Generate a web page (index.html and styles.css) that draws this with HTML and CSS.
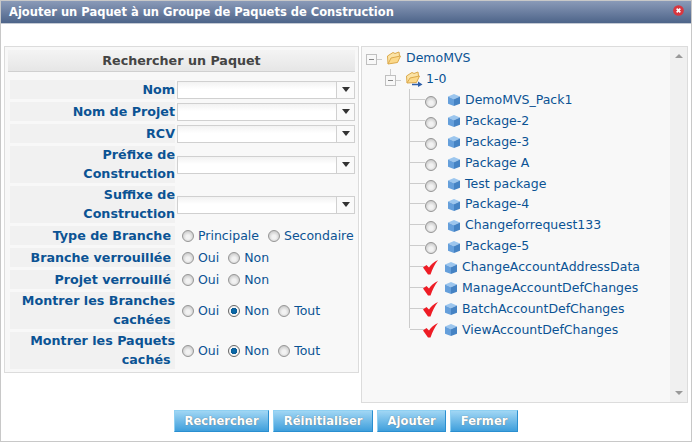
FILE: index.html
```html
<!DOCTYPE html>
<html lang="fr">
<head>
    <meta charset="UTF-8">
    <title>Ajouter un Paquet</title>
    <link rel="stylesheet" href="styles.css">
</head>
<body>
<div class="dialog">
    <div class="titlebar">
        <span>Ajouter un Paquet à un Groupe de Paquets de Construction</span>
        <span class="close">
            <svg width="11" height="11" viewBox="0 0 12 12"><circle cx="6" cy="6" r="5.8" fill="#d8363f"/><path d="M4 4l4 4M8 4l-4 4" stroke="#fff" stroke-width="1.800"/></svg>
        </span>
    </div>

    <div class="columns">
        <form class="search-panel">
            <div class="panel-title">Rechercher un Paquet</div>
            <div class="fields">
                <label class="field-label">Nom</label>
                <div class="field"><div class="combo"><span class="combo-text"></span><span class="combo-btn"></span></div></div>

                <label class="field-label">Nom de Projet</label>
                <div class="field"><div class="combo"><span class="combo-text"></span><span class="combo-btn"></span></div></div>

                <label class="field-label">RCV</label>
                <div class="field"><div class="combo"><span class="combo-text"></span><span class="combo-btn"></span></div></div>

                <label class="field-label tall">Préfixe de Construction</label>
                <div class="field"><div class="combo"><span class="combo-text"></span><span class="combo-btn"></span></div></div>

                <label class="field-label tall">Suffixe de Construction</label>
                <div class="field"><div class="combo"><span class="combo-text"></span><span class="combo-btn"></span></div></div>

                <label class="field-label pad">Type de Branche</label>
                <div class="field radios">
                    <label><input type="radio" name="type">Principale</label>
                    <label><input type="radio" name="type">Secondaire</label>
                </div>

                <label class="field-label pad">Branche verrouillée</label>
                <div class="field radios">
                    <label><input type="radio" name="bv">Oui</label>
                    <label><input type="radio" name="bv">Non</label>
                </div>

                <label class="field-label pad">Projet verrouillé</label>
                <div class="field radios">
                    <label><input type="radio" name="pv">Oui</label>
                    <label><input type="radio" name="pv">Non</label>
                </div>

                <label class="field-label tall">Montrer les Branches cachées&nbsp;</label>
                <div class="field radios">
                    <label><input type="radio" name="mb">Oui</label>
                    <label><input type="radio" name="mb" checked>Non</label>
                    <label><input type="radio" name="mb">Tout</label>
                </div>

                <label class="field-label tall">Montrer les Paquets cachés&nbsp;</label>
                <div class="field radios">
                    <label><input type="radio" name="mp">Oui</label>
                    <label><input type="radio" name="mp" checked>Non</label>
                    <label><input type="radio" name="mp">Tout</label>
                </div>
            </div>
        </form>

        <div class="tree-panel">
            <div class="tree">
                <div class="tree-row">
                    <span class="toggle"></span><span class="stub-short"></span>
                    <svg class="folder" width="14" height="14" viewBox="0 0 14 14"><path d="M1 13L.5 5 6 1.500l2 1 4-1.500 .5 4" fill="#fbe3a6" stroke="#dba94c"/><path d="M1 13L4 7l9.500-2L10.500 11.500z" fill="#fcd98a" stroke="#dba94c"/></svg>
                    <span class="root-name">DemoMVS</span>
                </div>
                <div class="branch-wrap">
                    <div class="tree-row">
                        <span class="toggle child"></span><span class="stub-short"></span>
                        <svg class="folder-arrow" width="17" height="16" viewBox="0 0 17 16"><path d="M1 12L.5 5 6 1.500l2 1 4-1.500 .5 4" fill="#fbe3a6" stroke="#dba94c"/><path d="M1 12L4 7l9.500-2L10.500 11.500z" fill="#fcd98a" stroke="#dba94c"/><path d="M6 13.500h7" stroke="#2f5fa8" stroke-width="1.500"/><path d="M12 10.500l4.500 3-4.500 2.500z" fill="#2f5fa8"/></svg>
                        <span class="branch-name">1-0</span>
                    </div>
                    <ul class="leaves">
                        <li><span class="stub"></span><input type="radio" name="pkg"><svg class="cube" viewBox="0 0 12 12"><use href="#cube"/></svg><span>DemoMVS_Pack1</span></li>
                        <li><span class="stub"></span><input type="radio" name="pkg"><svg class="cube" viewBox="0 0 12 12"><use href="#cube"/></svg><span>Package-2</span></li>
                        <li><span class="stub"></span><input type="radio" name="pkg"><svg class="cube" viewBox="0 0 12 12"><use href="#cube"/></svg><span>Package-3</span></li>
                        <li><span class="stub"></span><input type="radio" name="pkg"><svg class="cube" viewBox="0 0 12 12"><use href="#cube"/></svg><span>Package A</span></li>
                        <li><span class="stub"></span><input type="radio" name="pkg"><svg class="cube" viewBox="0 0 12 12"><use href="#cube"/></svg><span>Test package</span></li>
                        <li><span class="stub"></span><input type="radio" name="pkg"><svg class="cube" viewBox="0 0 12 12"><use href="#cube"/></svg><span>Package-4</span></li>
                        <li><span class="stub"></span><input type="radio" name="pkg"><svg class="cube" viewBox="0 0 12 12"><use href="#cube"/></svg><span>Changeforrequest133</span></li>
                        <li><span class="stub"></span><input type="radio" name="pkg"><svg class="cube" viewBox="0 0 12 12"><use href="#cube"/></svg><span>Package-5</span></li>
                        <li class="done"><span class="stub"></span><svg class="check" viewBox="0 0 15 15"><use href="#check"/></svg><svg class="cube" viewBox="0 0 12 12"><use href="#cube"/></svg><span>ChangeAccountAddressData</span></li>
                        <li class="done"><span class="stub"></span><svg class="check" viewBox="0 0 15 15"><use href="#check"/></svg><svg class="cube" viewBox="0 0 12 12"><use href="#cube"/></svg><span>ManageAccountDefChanges</span></li>
                        <li class="done"><span class="stub"></span><svg class="check" viewBox="0 0 15 15"><use href="#check"/></svg><svg class="cube" viewBox="0 0 12 12"><use href="#cube"/></svg><span>BatchAccountDefChanges</span></li>
                        <li class="done"><span class="stub"></span><svg class="check" viewBox="0 0 15 15"><use href="#check"/></svg><svg class="cube" viewBox="0 0 12 12"><use href="#cube"/></svg><span>ViewAccountDefChanges</span></li>
                    </ul>
                </div>
            </div>
            <div class="scrollbar"><span class="arrow-up"></span><span class="arrow-down"></span></div>
        </div>
    </div>

    <div class="actions">
        <button type="button">Rechercher</button>
        <button type="button">Réinitialiser</button>
        <button type="button">Ajouter</button>
        <button type="button">Fermer</button>
    </div>
</div>

<svg width="0" height="0" class="defs">
    <symbol id="cube" viewBox="0 0 12 12">
        <path d="M6 0L12 2.500 6 5.200 0 2.500z" fill="#9cc6ee"/>
        <path d="M0 2.500L6 5.200V12L0 9.800z" fill="#659fdb"/>
        <path d="M12 2.500L6 5.200V12l6-2.200z" fill="#4583c4"/>
    </symbol>
    <symbol id="check" viewBox="0 0 15 15">
        <path d="M0 7.500L3.500 5 6 7.500C8 4.500 11 1.800 15 0 12 3.800 9.500 8.500 7.500 14.500L5 14.500z" fill="#ee1c25"/>
    </symbol>
</svg>
</body>
</html>
```

FILE: styles.css
```css
* {
    box-sizing: border-box;
    font-family: 'DejaVu Sans', sans-serif;
}

body {
    margin: 0;
    background-color: #fff;
    color: #0b5394;
    font-size: 12.500px;
}

.defs {
    display: block;
    height: 0;
}

.dialog {
    width: 692px;
    height: 442px;
    border: 1px solid #c8c8c8;
    background-color: #fff;
    display: flex;
    flex-direction: column;
}

.titlebar {
    height: 23px;
    flex: none;
    background: linear-gradient(#8a9ab8, #4d6489);
    border-bottom: 1px solid #c4cad4;
    color: #fff;
    font-weight: bold;
    font-size: 11.500px;
    display: flex;
    align-items: center;
    justify-content: space-between;
    padding: 0 7px 0 8px;
}

.close {
    display: flex;
    margin-bottom: 3px;
}

.columns {
    display: flex;
    align-items: flex-start;
    padding: 22px 4px 0 3px;
    gap: 2px;
}

.search-panel {
    width: 355px;
    height: 327px;
    flex: none;
    border: 1px solid #dcdcdc;
    background-color: #f8f8f8;
    padding: 3px;
}

.panel-title {
    height: 22px;
    background: linear-gradient(#f4f4f4, #e6e6e6);
    border-bottom: 1px solid #d0d0d0;
    color: #444;
    font-weight: bold;
    font-size: 12.700px;
    text-align: center;
    line-height: 21px;
}

.fields {
    display: grid;
    grid-template-columns: 165px 178px;
    column-gap: 2px;
    row-gap: 3px;
    margin: 8px 0 0 2px;
}

.field-label {
    background-color: #f1f1f1;
    font-weight: bold;
    font-size: 12.700px;
    text-align: right;
    line-height: 19px;
    height: 19px;
}

.field-label.tall {
    height: 37px;
    line-height: 18.500px;
}

.field-label.pad {
    padding-right: 4px;
}

.field {
    display: flex;
    align-items: center;
}

.combo {
    width: 100%;
    height: 18px;
    display: flex;
    border: 1px solid #d0d0d0;
    background: linear-gradient(#f2f2f2, #fff 45%);
}

.combo-text {
    flex: 1;
}

.combo-btn {
    width: 18px;
    border-left: 1px solid #d0d0d0;
    background-color: #fafafa;
    display: flex;
    align-items: center;
    justify-content: center;
}

.combo-btn::after {
    content: "";
    border-left: 4px solid transparent;
    border-right: 4px solid transparent;
    border-top: 5px solid #333;
}

.radios {
    gap: 9px;
    padding-left: 5px;
}

.radios label {
    display: flex;
    align-items: center;
}

input[type="radio"] {
    appearance: none;
    width: 12px;
    height: 12px;
    margin: 1px 4px 0 0;
    flex: none;
    border-radius: 50%;
    border: 1px solid #969696;
    background: radial-gradient(circle at 50% 60%, #f2f2f2 25%, #b8b8b8 100%);
}

input[type="radio"]:checked {
    background: radial-gradient(circle, #0b6fb0 0, #0b5c96 3px, #f4f4f4 3.500px);
    border-color: #666;
}

.tree-panel {
    width: 327px;
    height: 357px;
    flex: none;
    border: 1px solid #dcdcdc;
    background-color: #f8f8f8;
    display: flex;
}

.tree {
    flex: 1;
    padding: 0 0 0 4px;
}

.tree-row {
    display: flex;
    align-items: center;
    height: 21px;
}

.toggle {
    width: 11px;
    height: 11px;
    border: 1px solid #c0c0c0;
    background: linear-gradient(#888, #888) center / 5px 1px no-repeat #f8f8f8;
    margin-top: 3px;
}

.toggle.child {
    position: relative;
    margin-top: 3px;
}

.toggle.child::before {
    content: "";
    position: absolute;
    left: 4px;
    top: -7px;
    width: 1px;
    height: 6px;
    background-color: #ccc;
}

.stub-short {
    width: 5px;
    height: 1px;
    background-color: #ccc;
    margin: 3px 5px 0 0;
}

.folder {
    margin: 0 5px 0 0;
}

.folder-arrow {
    margin: 1px 3px 0 0;
}

.branch-wrap {
    margin-left: 19px;
}

.leaves {
    list-style: none;
    margin: 0 0 0 24px;
    padding: 0;
    border-left: 1px solid #ccc;
    height: 239px;
}

.leaves li {
    display: flex;
    align-items: center;
    height: 20.900px;
}

.stub {
    width: 15px;
    height: 1px;
    background-color: #ccc;
    flex: none;
}

.leaves input[type="radio"] {
    margin: 5px 11px 0 0;
}

.cube {
    width: 12px;
    height: 12px;
    margin: 2px 5px 0 0;
    flex: none;
}

.check {
    width: 15px;
    height: 15px;
    margin: 2px 7px 0 -2px;
    flex: none;
}

.scrollbar {
    width: 17px;
    background-color: #f0f0f0;
    display: flex;
    flex-direction: column;
    justify-content: space-between;
    align-items: center;
    padding: 7px 0;
}

.arrow-up,
.arrow-down {
    border-left: 4px solid transparent;
    border-right: 4px solid transparent;
}

.arrow-up {
    border-bottom: 4px solid #999;
}

.arrow-down {
    border-top: 4px solid #999;
}

.actions {
    display: flex;
    justify-content: center;
    gap: 4px;
    padding-top: 7px;
}

.actions button {
    height: 22px;
    padding: 0 9.500px;
    border: 1px solid #2a8fd0;
    border-top-color: #8fd0f2;
    border-left-color: #8fd0f2;
    background: linear-gradient(#a0d6f4, #3f9fdc);
    color: #fff;
    font-weight: bold;
    font-size: 11.600px;
    text-shadow: 0 0 1px #666;
}
```
